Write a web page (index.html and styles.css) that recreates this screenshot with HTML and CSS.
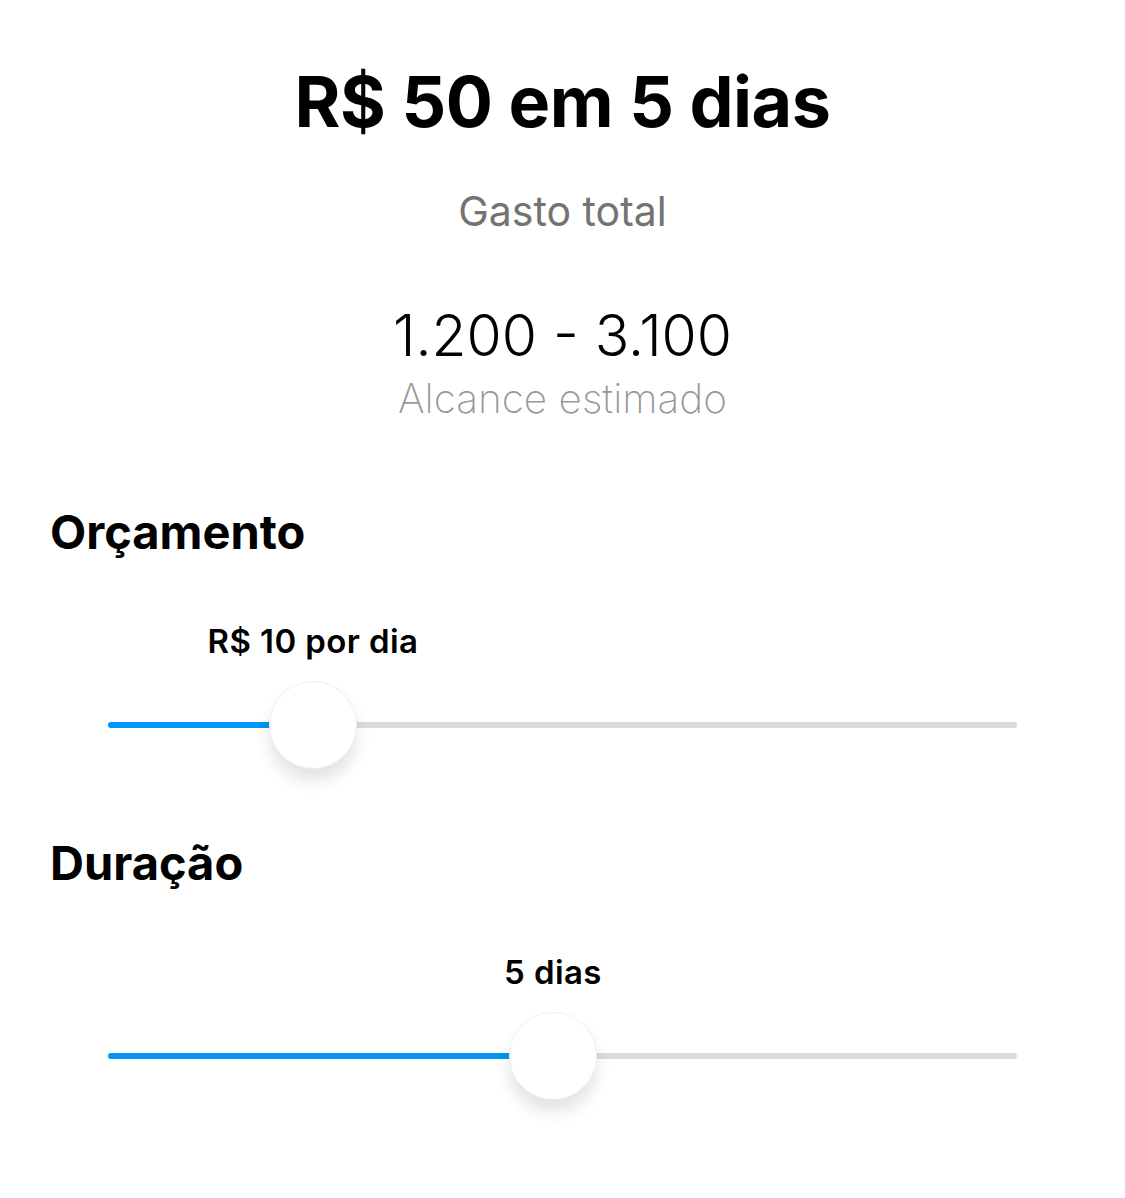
FILE: index.html
```html
<!DOCTYPE html>
<html lang="pt-BR">
<head>
    <meta charset="UTF-8">
    <meta name="viewport" content="width=device-width, initial-scale=1.0">
    <title>Orçamento e duração</title>
    <link rel="stylesheet" href="styles.css">
</head>
<body>
    <main class="page">
        <header class="summary">
            <h1 class="total">R$ 50 em 5 dias</h1>
            <p class="total-label">Gasto total</p>
            <p class="reach">1.200 - 3.100</p>
            <p class="reach-label">Alcance estimado</p>
        </header>

        <section class="setting">
            <h2>Orçamento</h2>
            <div class="slider" style="--pos: 22.55%">
                <div class="slider-value">R$ 10 por dia</div>
                <div class="slider-row">
                    <div class="track"></div>
                    <div class="fill"></div>
                    <div class="thumb"></div>
                </div>
            </div>
        </section>

        <section class="setting">
            <h2>Duração</h2>
            <div class="slider" style="--pos: 48.95%">
                <div class="slider-value">5 dias</div>
                <div class="slider-row">
                    <div class="track"></div>
                    <div class="fill"></div>
                    <div class="thumb"></div>
                </div>
            </div>
        </section>
    </main>
</body>
</html>
```

FILE: styles.css
```css
body {
    margin: 0;
    background: #fff;
    color: #000;
    font-family: Inter, "Liberation Sans", sans-serif;
}

.page {
    width: 1125px;
    padding-bottom: 60px;
}

.summary {
    padding-top: 60px;
    text-align: center;
}

.total {
    margin: 0;
    font-size: 70px;
    line-height: 84px;
    font-weight: 700;
    letter-spacing: -0.5px;
}

.total-label {
    margin: 43px 0 0;
    font-size: 41px;
    line-height: 48px;
    color: #737373;
}

.reach {
    margin: 67px 0 0;
    font-size: 57px;
    line-height: 68px;
    font-weight: 300;
}

.reach-label {
    margin: 5px 0 0;
    font-size: 40.5px;
    line-height: 48px;
    font-weight: 250;
    color: #999;
}

.setting {
    margin-top: 80px;
    padding: 0 50px;
}

.setting + .setting {
    margin-top: 65px;
}

.setting h2 {
    margin: 0;
    font-size: 47px;
    line-height: 58px;
    font-weight: 700;
}

.slider {
    position: relative;
    margin: 61px 58px 0;
}

.slider-value {
    position: relative;
    left: var(--pos);
    display: inline-block;
    transform: translateX(-50%);
    font-size: 33px;
    line-height: 38px;
    font-weight: 600;
    letter-spacing: 0.4px;
    white-space: nowrap;
}

.slider-row {
    position: relative;
    height: 88px;
    margin-top: 21px;
}

.track,
.fill {
    position: absolute;
    top: 41px;
    left: 0;
    height: 6px;
    border-radius: 3px;
}

.track {
    right: 0;
    background: #dbdbdb;
}

.fill {
    width: var(--pos);
    background: #0095f6;
}

.thumb {
    position: absolute;
    top: 0;
    left: calc(var(--pos) - 44px);
    width: 86px;
    height: 86px;
    border: 1px solid #efefef;
    border-radius: 50%;
    background: #fff;
    box-shadow: 0 12px 16px rgba(0, 0, 0, 0.11);
}
```
